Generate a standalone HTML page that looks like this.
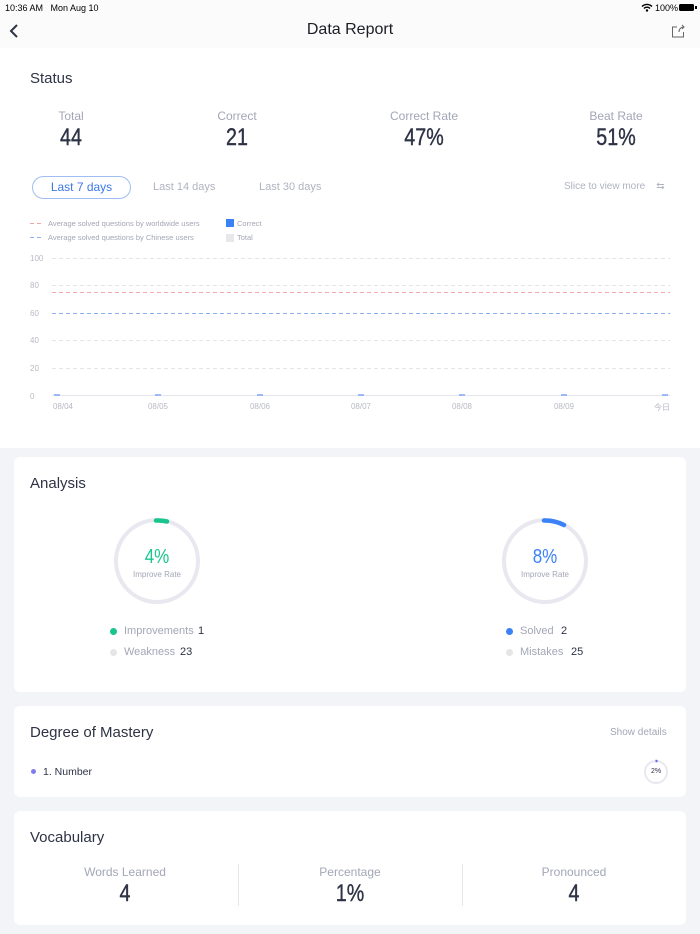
<!DOCTYPE html><html><head><meta charset="utf-8"><style>
*{margin:0;padding:0;box-sizing:border-box}
body{width:700px;height:934px;background:#f3f4f8;font-family:"Liberation Sans",sans-serif;position:relative;overflow:hidden;color:#2e3345}
.a{position:absolute;white-space:nowrap}
.c{transform:translateX(-50%);text-align:center}
.lbl{color:#a3a6b6;font-size:12px}
.num{font-size:24px;color:#2e3345;transform:translateX(-50%) scaleX(0.82);-webkit-text-stroke:0.4px #2e3345}
.card{position:absolute;left:14px;width:672px;background:#fff;border-radius:6px}
.h{font-size:15px;color:#2e3345}
.yl{position:absolute;left:30px;font-size:8px;color:#b8bac4}
.xl{position:absolute;top:402px;font-size:8px;color:#b8bac4;transform:translateX(-50%)}
.bar{position:absolute;top:394px;width:6px;height:2px;background:#9cb8f5;transform:translateX(-50%)}
.pct{transform:translateX(-50%) scaleX(0.85)}
</style></head><body>
<div class="a" style="left:0;top:0;width:700px;height:48px;background:#fbfbfb"></div>
<div class="a" style="left:5px;top:3px;font-size:9px;color:#000">10:36 AM&nbsp;&nbsp; Mon Aug 10</div>
<div class="a" style="left:655px;top:3px;font-size:9px;color:#000">100%</div>
<svg class="a" style="left:641px;top:3px" width="12" height="9" viewBox="0 0 12 9"><path d="M1 3.5a7 7 0 0 1 10 0M3 5.5a4 4 0 0 1 6 0" stroke="#000" stroke-width="1.4" fill="none"/><circle cx="6" cy="7.5" r="1.2"/></svg>
<div class="a" style="left:679px;top:4px;width:15px;height:7px;background:#000;border-radius:1.5px"></div>
<div class="a" style="left:695px;top:6px;width:1.5px;height:3px;background:#000"></div>
<svg class="a" style="left:8px;top:23px" width="12" height="16" viewBox="0 0 12 16"><path d="M9 2L3 8l6 6" stroke="#2e3345" stroke-width="2" fill="none"/></svg>
<div class="a c" style="left:350px;top:21px;font-size:16px;color:#1c1e26">Data Report</div>
<svg class="a" style="left:671px;top:24px" width="15" height="14" viewBox="0 0 15 14"><path d="M6 3H1.5v10h11V8M8 8c0-3 2-5 5-5M11 1l2 2-2 2" stroke="#666" stroke-width="1" fill="none"/></svg>

<div class="a" style="left:0;top:48px;width:700px;height:400px;background:#fff"></div>
<div class="a h" style="left:30px;top:70px">Status</div>
<div class="a c lbl" style="left:71px;top:109px">Total</div><div class="a num" style="left:71px;top:124px">44</div>
<div class="a c lbl" style="left:237px;top:109px">Correct</div><div class="a num" style="left:237px;top:124px">21</div>
<div class="a c lbl" style="left:424px;top:109px">Correct Rate</div><div class="a num" style="left:424px;top:124px">47%</div>
<div class="a c lbl" style="left:616px;top:109px">Beat Rate</div><div class="a num" style="left:616px;top:124px">51%</div>
<div class="a" style="left:32px;top:176px;width:99px;height:23px;border:1px solid #9fbdf3;border-radius:12px;color:#3b78e7;font-size:12px;text-align:center;line-height:21px">Last 7 days</div>
<div class="a lbl" style="left:153px;top:181px;font-size:11px;color:#b0b3c0">Last 14 days</div>
<div class="a lbl" style="left:259px;top:181px;font-size:11px;color:#b0b3c0">Last 30 days</div>
<div class="a lbl" style="left:564px;top:181px;font-size:10px;color:#b0b3c0">Slice to view more&nbsp;&nbsp;&nbsp; ⇆</div>
<svg class="a" style="left:0;top:0" width="700" height="420">
<g stroke-width="1" fill="none" stroke-dasharray="4 3">
<line x1="30" y1="223.5" x2="44" y2="223.5" stroke="#f3a3a3"/>
<line x1="30" y1="237.5" x2="44" y2="237.5" stroke="#8fb0f0"/>
<line x1="52" y1="258.5" x2="670" y2="258.5" stroke="#e4e5ea"/>
<line x1="52" y1="285.5" x2="670" y2="285.5" stroke="#e4e5ea"/>
<line x1="52" y1="292.5" x2="670" y2="292.5" stroke="#f6a9a9"/>
<line x1="52" y1="313.5" x2="670" y2="313.5" stroke="#8fb0f0"/>
<line x1="52" y1="340.5" x2="670" y2="340.5" stroke="#e4e5ea"/>
<line x1="52" y1="368.5" x2="670" y2="368.5" stroke="#e4e5ea"/>
</g>
<line x1="52" y1="395.5" x2="670" y2="395.5" stroke="#e4e5ea"/>
</svg>
<div class="a" style="left:48px;top:219px;font-size:7.5px;color:#a3a6b6">Average solved questions by worldwide users</div>
<div class="a" style="left:48px;top:233px;font-size:7.5px;color:#a3a6b6">Average solved questions by Chinese users</div>
<div class="a" style="left:226px;top:219px;width:8px;height:8px;background:#3b82f6"></div>
<div class="a" style="left:237px;top:219px;font-size:7.5px;color:#a3a6b6">Correct</div>
<div class="a" style="left:226px;top:234px;width:8px;height:8px;background:#e8e8ea"></div>
<div class="a" style="left:237px;top:233px;font-size:7.5px;color:#a3a6b6">Total</div>
<div class="yl" style="top:254px">100</div>
<div class="yl" style="top:281px">80</div>
<div class="yl" style="top:309px">60</div>
<div class="yl" style="top:336px">40</div>
<div class="yl" style="top:364px">20</div>
<div class="yl" style="top:392px">0</div>
<div class="bar" style="left:57px"></div><div class="bar" style="left:158px"></div><div class="bar" style="left:260px"></div><div class="bar" style="left:361px"></div><div class="bar" style="left:462px"></div><div class="bar" style="left:564px"></div><div class="bar" style="left:665px"></div>
<div class="xl" style="left:63px">08/04</div><div class="xl" style="left:158px">08/05</div><div class="xl" style="left:260px">08/06</div><div class="xl" style="left:361px">08/07</div><div class="xl" style="left:462px">08/08</div><div class="xl" style="left:564px">08/09</div><div class="xl" style="left:662px">今日</div>

<div class="card" style="top:457px;height:235px"></div>
<div class="a h" style="left:30px;top:475px">Analysis</div>
<svg class="a" style="left:113px;top:517px" width="88" height="88"><circle cx="44" cy="44" r="41" stroke="#e9e8f0" stroke-width="4" fill="none"/><path d="M43 3.5A41 41 0 0 1 54 4.5" stroke="#18c58d" stroke-width="4.5" fill="none" stroke-linecap="round"/></svg>
<div class="a pct" style="left:157px;top:546px;font-size:20px;color:#18c58d">4%</div>
<div class="a c" style="left:157px;top:570px;font-size:8px;color:#a3a6b6">Improve Rate</div>
<svg class="a" style="left:501px;top:517px" width="88" height="88"><circle cx="44" cy="44" r="41" stroke="#e9e8f0" stroke-width="4" fill="none"/><path d="M43 3.5A41 41 0 0 1 63 8" stroke="#3b82f6" stroke-width="4.5" fill="none" stroke-linecap="round"/></svg>
<div class="a pct" style="left:545px;top:546px;font-size:20px;color:#3b82f6">8%</div>
<div class="a c" style="left:545px;top:570px;font-size:8px;color:#a3a6b6">Improve Rate</div>
<div class="a" style="left:110px;top:628px;width:7px;height:7px;border-radius:50%;background:#18c58d"></div>
<div class="a" style="left:124px;top:625px;font-size:11px;color:#a3a6b6">Improvements</div><div class="a" style="left:198px;top:625px;font-size:11px;color:#2e3345">1</div>
<div class="a" style="left:110px;top:649px;width:7px;height:7px;border-radius:50%;background:#e5e5e8"></div>
<div class="a" style="left:124px;top:646px;font-size:11px;color:#a3a6b6">Weakness</div><div class="a" style="left:180px;top:646px;font-size:11px;color:#2e3345">23</div>
<div class="a" style="left:506px;top:628px;width:7px;height:7px;border-radius:50%;background:#3b82f6"></div>
<div class="a" style="left:520px;top:625px;font-size:11px;color:#a3a6b6">Solved</div><div class="a" style="left:561px;top:625px;font-size:11px;color:#2e3345">2</div>
<div class="a" style="left:506px;top:649px;width:7px;height:7px;border-radius:50%;background:#e5e5e8"></div>
<div class="a" style="left:520px;top:646px;font-size:11px;color:#a3a6b6">Mistakes</div><div class="a" style="left:571px;top:646px;font-size:11px;color:#2e3345">25</div>

<div class="card" style="top:706px;height:91px"></div>
<div class="a h" style="left:30px;top:724px">Degree of Mastery</div>
<div class="a" style="left:610px;top:727px;font-size:10px;color:#a3a6b6">Show details</div>
<div class="a" style="left:31px;top:769px;width:5px;height:5px;border-radius:50%;background:#7f7cf0"></div>
<div class="a" style="left:43px;top:766px;font-size:10.5px;color:#2e3345">1. Number</div>
<svg class="a" style="left:643px;top:759px" width="26" height="26"><circle cx="13" cy="13" r="11" stroke="#e9e8f0" stroke-width="2" fill="none"/><path d="M12.5 2A11 11 0 0 1 14.5 2.1" stroke="#6b6df0" stroke-width="2.5" fill="none"/></svg>
<div class="a c" style="left:656px;top:768px;font-size:7px;color:#2e3345">2%</div>

<div class="card" style="top:811px;height:114px"></div>
<div class="a h" style="left:30px;top:829px">Vocabulary</div>
<div class="a c lbl" style="left:125px;top:865px">Words Learned</div><div class="a num" style="left:125px;top:880px">4</div>
<div class="a c lbl" style="left:350px;top:865px">Percentage</div><div class="a num" style="left:350px;top:880px">1%</div>
<div class="a c lbl" style="left:574px;top:865px">Pronounced</div><div class="a num" style="left:574px;top:880px">4</div>
<div class="a" style="left:238px;top:864px;width:1px;height:42px;background:#e6e7ec"></div>
<div class="a" style="left:462px;top:864px;width:1px;height:42px;background:#e6e7ec"></div>
</body></html>
